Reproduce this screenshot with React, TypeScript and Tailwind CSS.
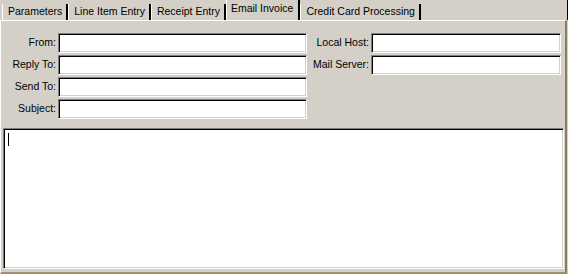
const sunken =
  "border border-t-[#808080] border-l-[#808080] border-b-white border-r-white shadow-[inset_1px_1px_0_#000,inset_-1px_-1px_0_#d4d0c8] bg-white"

const tabs = ["Parameters", "Line Item Entry", "Receipt Entry", "Email Invoice", "Credit Card Processing"]

function Field({ label, labelW, inputW }: { label: string; labelW: string; inputW: string }) {
  return (
    <div className="flex items-center h-[20px]">
      <div className={`${labelW} text-right pr-[2px]`}>{label}</div>
      <div className={`${inputW} h-[20px] ${sunken}`} />
    </div>
  )
}

export default function App() {
  return (
    <div
      className="w-[568px] h-[274px] bg-[#d4d0c8] text-black text-[10.5px] flex flex-col overflow-hidden"
      style={{ fontFamily: '"Liberation Sans", Arial, sans-serif' }}
    >
      <div className="h-[20px] flex items-end pl-[2px] pr-0">
        {tabs.map((t) => {
          const active = t === "Email Invoice"
          return (
            <div
              key={t}
              className={
                active
                  ? "h-[20px] pl-[4px] pr-[5px] pt-[2px] border-l border-white border-r-2 border-r-black leading-[13px] whitespace-nowrap"
                  : "h-[16px] pl-[5px] pr-[4px] border-l border-white border-r-2 border-r-black leading-[15px] whitespace-nowrap"
              }
            >
              {t}
            </div>
          )
        })}
        <div className="flex-1" />
        <div className="w-px h-[20px] bg-black" />
      </div>

      <div className="w-[567px] flex-1 border-t border-l border-t-white border-l-white border-r-2 border-r-[#8a7d62] border-b-2 border-b-[#a0906e] flex flex-col">
        <div className="flex pt-[12px]">
          <div className="flex flex-col gap-[2px]">
            <Field label="From:" labelW="w-[57px]" inputW="w-[249px]" />
            <Field label="Reply To:" labelW="w-[57px]" inputW="w-[249px]" />
            <Field label="Send To:" labelW="w-[57px]" inputW="w-[249px]" />
            <Field label="Subject:" labelW="w-[57px]" inputW="w-[249px]" />
          </div>
          <div className="flex flex-col gap-[2px]">
            <Field label="Local Host:" labelW="w-[64px]" inputW="w-[190px]" />
            <Field label="Mail Server:" labelW="w-[64px]" inputW="w-[190px]" />
          </div>
        </div>
        <div className={`mt-[9px] ml-[2px] w-[561px] h-[141px] ${sunken} relative`}>
          <div className="absolute left-[4px] top-[4px] w-px h-[13px] bg-black" />
        </div>
      </div>
    </div>
  )
}
